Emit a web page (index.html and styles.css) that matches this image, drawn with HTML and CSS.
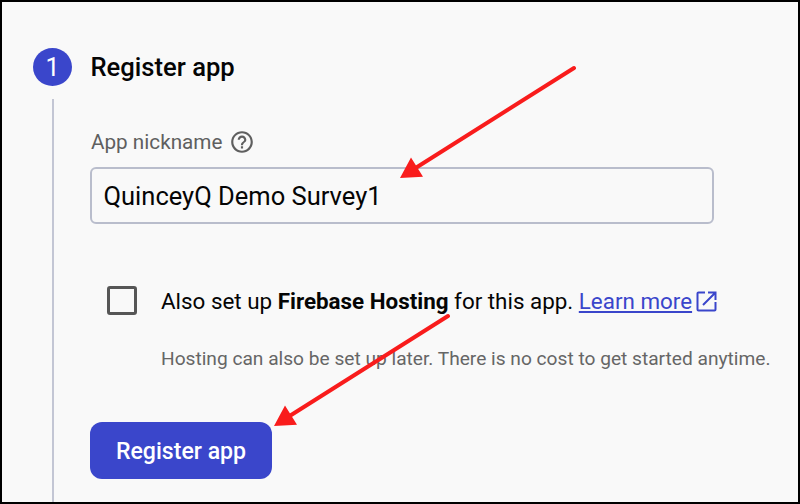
FILE: index.html
```
<!DOCTYPE html>
<html lang="en">
<head>
<meta charset="utf-8">
<title>Register app</title>
<link rel="stylesheet" href="styles.css">
</head>
<body>
<main class="frame">
  <div class="rail">
    <div class="step">1</div>
    <div class="line"></div>
  </div>
  <section class="content">
    <h1 class="title"><span>Register app</span></h1>
    <div class="label">
      <span>App nickname</span>
      <svg class="help" viewBox="0 0 24 24"><path d="M11 18h2v-2h-2v2zm1-16C6.480 2 2 6.480 2 12s4.480 10 10 10 10-4.480 10-10S17.520 2 12 2zm0 18c-4.410 0-8-3.590-8-8s3.590-8 8-8 8 3.590 8 8-3.590 8-8 8zm0-14c-2.210 0-4 1.790-4 4h2c0-1.100.9-2 2-2s2 .9 2 2c0 2-3 1.750-3 5h2c0-2.250 3-2.500 3-5 0-2.210-1.790-4-4-4z"/></svg>
    </div>
    <div class="field"><span>QuinceyQ Demo Survey1</span></div>
    <div class="option">
      <span class="checkbox"></span>
      <p class="option-text"><span>Also set up <b>Firebase Hosting</b> for this app. </span><a class="link">Learn more</a></p>
      <svg class="external" viewBox="0 0 21 21"><path d="M9 1.500H2.500a1 1 0 0 0-1 1v16a1 1 0 0 0 1 1h16a1 1 0 0 0 1-1V11M12 1.500h7.500V9M19 2 7 14"/></svg>
    </div>
    <p class="hint"><span>Hosting can also be set up later. There is no cost to get started anytime.</span></p>
    <div class="button"><span>Register app</span></div>
  </section>
  <svg class="arrows" viewBox="0 0 800 504">
    <path class="shaft" d="M574 68 414 169M448 316 288 417"/>
    <path class="head" d="M400 178l11-20.500 12 19.200zM274 426l11-20.500 12 19.200z"/>
  </svg>
</main>
</body>
</html>
```
FILE: styles.css
```
* { box-sizing: border-box; }
body { margin: 0; }
.frame {
  position: relative;
  display: flex;
  width: 800px;
  height: 504px;
  border: 2px solid #000;
  background: #f9f9f9;
  color: #050505;
  font-family: Roboto, sans-serif;
  white-space: nowrap;
  overflow: hidden;
}
.rail {
  display: flex;
  flex-direction: column;
  align-items: center;
  width: 39px;
  margin: 46px 0 0 31px;
}
.step {
  width: 39px;
  height: 38px;
  border-radius: 50%;
  background: #3a46cb;
  color: #fff;
  font-size: 25px;
  line-height: 39px;
  text-align: center;
}
.line {
  flex: 1;
  width: 2px;
  margin-top: 13px;
  background: #c3c6d4;
}
.content { margin-left: 18px; }
.title {
  height: 38px;
  margin: 46px 0 0 0.500px;
  font-size: 25.600px;
  font-weight: 500;
  line-height: 38px;
}
.label {
  display: flex;
  align-items: center;
  gap: 6.500px;
  height: 30px;
  margin: 41px 0 0 1px;
  color: #5f5f5f;
  font-size: 20.700px;
}
.help { width: 26px; height: 26px; fill: #5f5f5f; }
.field {
  width: 624px;
  height: 57px;
  margin-top: 10px;
  padding-left: 11.500px;
  border: 2px solid #b9bdcc;
  border-radius: 6px;
  font-size: 25.500px;
  line-height: 55px;
}
.option {
  display: flex;
  align-items: center;
  height: 32px;
  margin: 60px 0 0 17px;
}
.checkbox {
  width: 30px;
  height: 29px;
  border: 3px solid #565656;
  border-radius: 3px;
}
.option-text { margin: 2px 0 0 24px; font-size: 22.400px; line-height: 34px; }
.link {
  color: #3a46cb;
  text-decoration: underline;
  text-decoration-thickness: 2px;
  text-underline-offset: 2px;
}
.external {
  width: 21px;
  height: 21px;
  margin: 2px 0 0 3.500px;
  fill: none;
  stroke: #3a46cb;
  stroke-width: 2;
}
.hint {
  margin: 30px 0 0 71px;
  color: #666;
  font-size: 19.150px;
  line-height: 26px;
}
.button {
  width: 182px;
  height: 57px;
  margin-top: 50px;
  border-radius: 12px;
  background: #3a46cb;
  color: #fff;
  font-size: 23.100px;
  font-weight: 500;
  line-height: 59px;
  text-align: center;
}
.arrows { position: absolute; top: -2px; left: -2px; width: 800px; height: 504px; }
.shaft { stroke: #f91c1c; stroke-width: 4; stroke-linecap: round; }
.head { fill: #f91c1c; }
```
